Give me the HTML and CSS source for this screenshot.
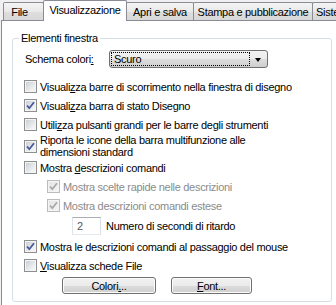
FILE: index.html
```html
<!DOCTYPE html>
<html lang="it">
<head>
  <meta charset="UTF-8" />
  <title>Opzioni - Visualizzazione</title>
  <link rel="stylesheet" href="styles.css">
</head>
<body>

  <div class="tabs">
    <div class="tab tab-file">File</div>
    <div class="tab active tab-view">Visualizzazione</div>
    <div class="tab tab-open">Apri e salva</div>
    <div class="tab tab-print">Stampa e pubblicazione</div>
    <div class="tab tab-system"><span>Sistema</span></div>
  </div>

  <div class="panel">
    <fieldset class="group">
      <legend>Elementi finestra</legend>

      <div class="combo-row">
        <span class="combo-label">Schema colori<u>:</u></span>
        <div class="combo">
          <span class="combo-value">Scuro</span>
          <span class="combo-arrow"></span>
        </div>
      </div>

      <div class="check">
        <span class="box"></span>
        <span>Visuali<u>z</u>za barre di scorrimento nella finestra di disegno</span>
      </div>
      <div class="check">
        <span class="box checked"><svg width="11" height="11" viewBox="0 0 11 11"><path d="M2 5.5 L4.3 8.2 L9 2.2" /></svg></span>
        <span>Visuali<u>z</u>za barra di stato Disegno</span>
      </div>
      <div class="check">
        <span class="box"></span>
        <span>Utili<u>z</u>za pulsanti grandi per le barre degli strumenti</span>
      </div>
      <div class="check tall">
        <span class="box checked"><svg width="11" height="11" viewBox="0 0 11 11"><path d="M2 5.5 L4.3 8.2 L9 2.2" /></svg></span>
        <span>Riporta le icone della barra multifunzione alle<br>dimensioni standard</span>
      </div>
      <div class="check">
        <span class="box"></span>
        <span>Mostra <u>d</u>escrizioni comandi</span>
      </div>
      <div class="check sub disabled">
        <span class="box checked"><svg width="11" height="11" viewBox="0 0 11 11"><path d="M2 5.5 L4.3 8.2 L9 2.2" /></svg></span>
        <span>Mostra scelte rapide nelle descrizioni</span>
      </div>
      <div class="check sub disabled">
        <span class="box checked"><svg width="11" height="11" viewBox="0 0 11 11"><path d="M2 5.5 L4.3 8.2 L9 2.2" /></svg></span>
        <span>Mostra descrizioni comandi estese</span>
      </div>

      <div class="delay">
        <span class="number">2</span>
        <span>Numero di secondi di ritardo</span>
      </div>

      <div class="check">
        <span class="box checked"><svg width="11" height="11" viewBox="0 0 11 11"><path d="M2 5.5 L4.3 8.2 L9 2.2" /></svg></span>
        <span>Mostra le descrizioni comandi al passaggio del mouse</span>
      </div>
      <div class="check">
        <span class="box"></span>
        <span><u>V</u>isualizza schede File</span>
      </div>

      <div class="buttons">
        <button class="btn btn-colors">Colori<u>.</u>..</button>
        <button class="btn btn-font"><u>F</u>ont...</button>
      </div>
    </fieldset>
  </div>

</body>
</html>
```

FILE: styles.css
```css
body {
  margin: 0;
  width: 336px;
  height: 305px;
  overflow: hidden;
  background: #f0f0f0;
  font-family: "Liberation Sans", Arial, sans-serif;
  font-size: 11px;
  letter-spacing: -0.3px;
  color: #000;
}

/* tab strip */
.tabs {
  display: flex;
  align-items: flex-end;
  height: 20px;
  padding-left: 4px;
}

.tab {
  flex: none;
  box-sizing: border-box;
  height: 18px;
  margin-left: -1px;
  border: 1px solid #898c95;
  border-bottom: none;
  border-radius: 2px 2px 0 0;
  background: linear-gradient(#f4f4f4, #e9e9e9 50%, #dedede 51%, #d8d8d8);
  display: flex;
  align-items: center;
  justify-content: center;
  white-space: nowrap;
  overflow: hidden;
}

.tab.active {
  position: relative;
  z-index: 1;
  height: 21px;
  margin-bottom: -1px;
  padding-bottom: 3px;
  background: #fff;
}

.tab-file { width: 41px; padding-right: 8px; }
.tab-view { width: 84px; }
.tab-open { width: 68px; }
.tab-print { width: 120px; }
.tab-system {
  width: 25px;
  justify-content: flex-start;
  padding-left: 3px;
  border-right: none;
  border-radius: 2px 0 0 0;
}

/* page */
.panel {
  margin-left: 1px;
  height: 290px;
  background: #fff;
  border-left: 1px solid #898c95;
  border-top: 1px solid #898c95;
}

.group {
  margin: 11px 4px 0 10px;
  padding: 0 11px 7px 11px;
  min-width: 0;
  border: 1px solid #d5dfe5;
  border-radius: 3px;
}

.group legend {
  margin-left: -5px;
  padding: 0 2px;
  line-height: 13px;
}

/* colour scheme combo */
.combo-row {
  display: flex;
  align-items: center;
  height: 20px;
  margin: 4px 0 8px;
}

.combo-label {
  width: 84px;
  padding-left: 1px;
}

.combo {
  box-sizing: border-box;
  width: 159px;
  height: 18px;
  border: 1px solid #707070;
  border-radius: 3px;
  background: linear-gradient(#f2f2f2, #ebebeb 50%, #dddddd 51%, #cfcfcf);
  display: flex;
  align-items: center;
  padding: 0 1px;
}

.combo-value {
  box-sizing: border-box;
  width: 139px;
  height: 14px;
  line-height: 12px;
  padding-left: 2px;
  border: 1px dotted #000;
}

.combo-arrow {
  flex: 1;
  display: flex;
  justify-content: center;
}

.combo-arrow::after {
  content: "";
  border-left: 3.5px solid transparent;
  border-right: 3.5px solid transparent;
  border-top: 4px solid #000;
  margin-top: 1px;
}

/* checkboxes */
.check {
  display: flex;
  align-items: center;
  height: 19px;
}

.check.tall {
  height: 24px;
  line-height: 12px;
}

.check.sub {
  padding-left: 23px;
}

.check.disabled {
  color: #8b8b8b;
}

.box {
  flex: none;
  box-sizing: border-box;
  width: 13px;
  height: 13px;
  margin-right: 3px;
  border: 1px solid #8e8f8f;
  background: linear-gradient(135deg, #c6cbd1, #eef0f2 70%, #f7f7f7);
  box-shadow: inset 0 0 0 1px #f4f4f4;
}

.box svg {
  display: block;
  fill: none;
  stroke: #46599a;
  stroke-width: 1.8;
}

.disabled .box {
  border-color: #bcbcbc;
  background: linear-gradient(135deg, #e4e4e4, #f5f5f5);
}

.disabled .box svg {
  stroke: #a8a8a8;
}

/* delay field */
.delay {
  display: flex;
  align-items: center;
  height: 22px;
  padding-left: 48px;
}

.number {
  box-sizing: border-box;
  width: 29px;
  height: 18px;
  margin-right: 5px;
  padding-left: 4px;
  line-height: 16px;
  border: 1px solid #abadb3;
  border-left-color: #e2e3ea;
  border-right-color: #dbdfe6;
  border-bottom-color: #e3e9ef;
  color: #555;
}

/* buttons */
.buttons {
  display: flex;
  margin-top: 2px;
  padding-left: 38px;
}

.btn {
  box-sizing: border-box;
  height: 17px;
  padding: 0;
  border: 1px solid #707070;
  border-radius: 3px;
  background: linear-gradient(#f2f2f2, #ebebeb 50%, #dddddd 51%, #cfcfcf);
  box-shadow: inset 0 0 0 1px #fcfcfc;
  font: inherit;
  letter-spacing: inherit;
  color: #000;
  line-height: 14px;
}

.btn-colors { width: 94px; }
.btn-font { width: 81px; margin-left: 15px; }
```
